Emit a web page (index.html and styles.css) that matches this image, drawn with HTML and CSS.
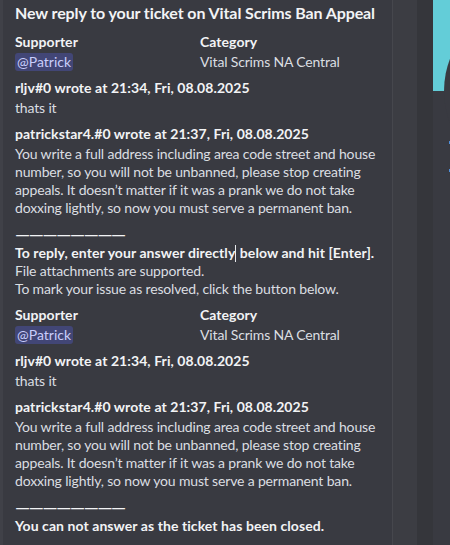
FILE: index.html
```html
<!DOCTYPE html>
<html lang="en">
<head>
<meta charset="utf-8">
<title>Ticket reply</title>
<link rel="stylesheet" href="styles.css">
</head>
<body>
<main class="layout">
  <article class="embed">
    <h1 class="embed-title">New reply to your ticket on Vital Scrims Ban Appeal</h1>

    <div class="fields">
      <div class="field">
        <div class="field-name">Supporter</div>
        <div class="field-value"><span class="mention">@Patrick</span></div>
      </div>
      <div class="field">
        <div class="field-name">Category</div>
        <div class="field-value">Vital Scrims NA Central</div>
      </div>
    </div>

    <div class="msg">
      <div class="msg-head">rljv#0 wrote at 21:34, Fri, 08.08.2025</div>
      <div class="msg-body">thats it</div>
    </div>
    <div class="msg">
      <div class="msg-head">patrickstar4.#0 wrote at 21:37, Fri, 08.08.2025</div>
      <div class="msg-body">You write a full address including area code street and house number, so you will not be unbanned, please stop creating appeals. It doesn’t matter if it was a prank we do not take doxxing lightly, so now you must serve a permanent ban.</div>
    </div>

    <div class="divider"><span class="dashes">————————</span></div>

    <p class="note"><strong class="note-strong">To reply, enter your answer directly<span class="caret"></span> below and hit [Enter].</strong><br>File attachments are supported.<br>To mark your issue as resolved, click the button below.</p>

    <div class="fields">
      <div class="field">
        <div class="field-name">Supporter</div>
        <div class="field-value"><span class="mention">@Patrick</span></div>
      </div>
      <div class="field">
        <div class="field-name">Category</div>
        <div class="field-value">Vital Scrims NA Central</div>
      </div>
    </div>

    <div class="msg">
      <div class="msg-head">rljv#0 wrote at 21:34, Fri, 08.08.2025</div>
      <div class="msg-body">thats it</div>
    </div>
    <div class="msg">
      <div class="msg-head">patrickstar4.#0 wrote at 21:37, Fri, 08.08.2025</div>
      <div class="msg-body">You write a full address including area code street and house number, so you will not be unbanned, please stop creating appeals. It doesn’t matter if it was a prank we do not take doxxing lightly, so now you must serve a permanent ban.</div>
    </div>

    <div class="divider"><span class="dashes">————————</span></div>

    <p class="note"><strong class="note-strong">You can not answer as the ticket has been closed.</strong></p>
  </article>

  <div class="rule"></div>
  <div class="col-a"></div>
  <div class="col-b"></div>

  <aside class="panel">
    <div class="banner"></div>
    <div class="avatar"></div>
    <span class="link-mark first"></span>
    <span class="link-mark"></span>
  </aside>
</main>
</body>
</html>
```
FILE: styles.css
```css
* { box-sizing: border-box; }

html, body {
  margin: 0;
  padding: 0;
  background: #393a41;
}

.layout {
  display: flex;
  height: 545px;
  overflow: hidden;
  font-family: Lato, "Noto Sans", sans-serif;
  font-size: 14px;
  line-height: 18px;
  color: #dbdee1;
}

.embed {
  flex: 0 0 392px;
  width: 392px;
  border-left: 3px solid #404148;
  background: #393a41;
  padding: 3px 12px 0 12px;
}

.embed-title {
  margin: 0;
  font-size: 16px;
  line-height: 20px;
  font-weight: 700;
  color: #f2f3f5;
  letter-spacing: -0.1px;
  white-space: nowrap;
}

.fields {
  display: grid;
  grid-template-columns: 185px 1fr;
  margin-top: 10px;
}

.field-name {
  font-weight: 700;
  color: #f2f3f5;
  letter-spacing: 0.05px;
}

.field-value {
  margin-top: 2px;
  letter-spacing: -0.16px;
}

.mention {
  display: inline-block;
  padding: 0 2px;
  border-radius: 3px;
  background: rgba(88, 101, 242, 0.3);
  color: #c9cdfb;
  letter-spacing: 0;
}

.msg { margin-top: 8px; }
.fields + .msg { margin-top: 7.5px; }

.msg-head {
  font-weight: 700;
  color: #f2f3f5;
  letter-spacing: 0.07px;
}

.msg-body {
  margin-top: 2px;
  letter-spacing: -0.16px;
}

.divider {
  margin-top: 9px;
  height: 18px;
  font-weight: 700;
  color: #f2f3f5;
  white-space: nowrap;
}

.dashes {
  display: inline-block;
  letter-spacing: -1px;
  transform: scaleX(1.35);
  transform-origin: 0 50%;
}

.note {
  margin: 0.5px 0 0;
  letter-spacing: -0.16px;
}

.note + .fields { margin-top: 8px; }

.note-strong {
  font-weight: 700;
  color: #f2f3f5;
  letter-spacing: 0.07px;
}

.caret {
  display: inline-block;
  width: 0;
  height: 17px;
  border-left: 1px solid #e8e9ec;
  vertical-align: -3.5px;
}

.rule { flex: 0 0 1px; background: #46474d; }
.col-a { flex: 0 0 24px; background: #3c3d43; }
.col-b { flex: 0 0 16px; background: #35363b; }

.panel {
  flex: 1 1 auto;
  position: relative;
  overflow: hidden;
  background: #393a41;
  display: flex;
  flex-direction: column;
}

.banner {
  flex: 0 0 91px;
  height: 91px;
  background: #63cdd8;
}

.avatar {
  position: absolute;
  left: 10.7px;
  top: 1px;
  width: 180px;
  height: 180px;
  border-radius: 50%;
  background: #393a41;
}

.link-mark {
  display: block;
  width: 1px;
  height: 3px;
  margin: 25px 0 0 16px;
  background: #4f8fdc;
}

.link-mark.first { margin-top: 50px; }
```
